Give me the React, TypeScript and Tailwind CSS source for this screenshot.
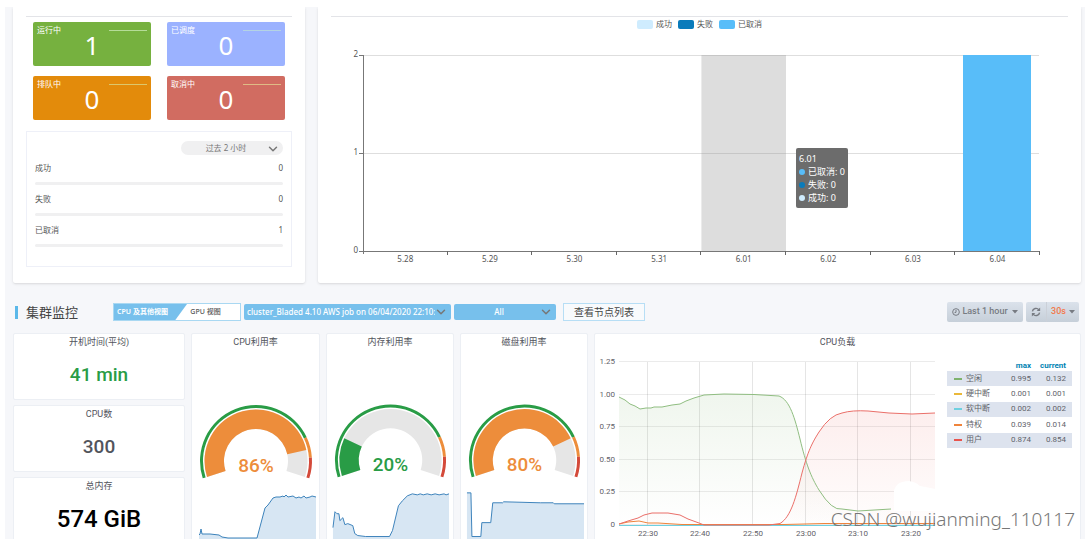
import type { ReactNode } from "react";
import { ChevronDown } from "lucide-react";

const STATUS_TILES = [
    { label: "运行中", value: 1, tile: "bg-[#76b13f]", line: "bg-[#b5dc98]" },
    { label: "已调度", value: 0, tile: "bg-[#9bb2ff]", line: "bg-[#b4d3e2]" },
    { label: "排队中", value: 0, tile: "bg-[#e38b0b]", line: "bg-[#dcc76c]" },
    { label: "取消中", value: 0, tile: "bg-[#d16c61]", line: "bg-[#dfbb85]" },
];

const RECENT = [
    { label: "成功", value: 0 },
    { label: "失败", value: 0 },
    { label: "已取消", value: 1 },
];

const JOB_LEGEND = [
    { label: "成功", color: "bg-[#cfecfe]" },
    { label: "失败", color: "bg-[#0a7bbb]" },
    { label: "已取消", color: "bg-[#58bdf9]" },
];

const JOB_TOOLTIP = [
    { label: "已取消", value: 0, color: "bg-[#58bdf9]" },
    { label: "失败", value: 0, color: "bg-[#0a7bbb]" },
    { label: "成功", value: 0, color: "bg-[#cfecfe]" },
];

const DAYS = ["5.28", "5.29", "5.30", "5.31", "6.01", "6.02", "6.03", "6.04"];

const CPU_ROWS = [
    { name: "空闲", color: "bg-[#7eb26d]", max: "0.995", current: "0.132" },
    { name: "硬中断", color: "bg-[#eab839]", max: "0.001", current: "0.001" },
    { name: "软中断", color: "bg-[#6ed0e0]", max: "0.002", current: "0.002" },
    { name: "特权", color: "bg-[#ef843c]", max: "0.039", current: "0.014" },
    { name: "用户", color: "bg-[#e8544d]", max: "0.874", current: "0.854" },
];

const CPU_SPARK =
    "7,202 8,201 9,196 10,201 12,201 18,201 27,202 30,204 36,205 65,205 69,190 73,175 76,172 81,165 84,164 88,164 91,163 92,164 94,162 96,164 101,163 104,165 107,164 109,165 112,163 114,165 118,164 120,163 124,164";
const MEMORY_SPARK =
    "6,196 8,180 10,182 12,182 13,189 16,186 18,193 21,192 26,194 28,202 31,204 39,205 63,205 66,199 72,174 76,169 81,164 86,162 91,163 94,162 97,163 101,162 105,163 109,162 113,163 118,162 120,163 123,162";
const DISK_SPARK =
    "6,161 10,161 11,205 20,205 21,191 30,191 32,171 42,171 43,170 80,171 93,171 94,172 124,172";

function arc(cx: number, cy: number, outer: number, inner: number, from: number, to: number) {
    const point = (r: number, t: number) => {
        const a = ((198 - t * 216) * Math.PI) / 180;
        return `${(cx + r * Math.cos(a)).toFixed(2)} ${(cy - r * Math.sin(a)).toFixed(2)}`;
    };
    const large = (to - from) * 216 > 180 ? 1 : 0;
    return `M${point(outer, from)}A${outer} ${outer} 0 ${large} 1 ${point(outer, to)}L${point(inner, to)}A${inner} ${inner} 0 ${large} 0 ${point(inner, from)}Z`;
}

function SelectArrow() {
    return (
        <ChevronDown
            strokeWidth={2.5}
            className="pointer-events-none absolute top-px right-[3px] h-[14px] w-[14px] text-[#777]"
        />
    );
}

function JobStatusCard() {
    return (
        <section className="rounded-b-xs bg-white px-3 pt-[9px] pb-4 shadow">
            <div className="mx-px border-t border-[#e3e4e8]" />
            <div className="mt-[5px] grid grid-cols-2 gap-x-4 gap-y-[10px] px-2">
                {STATUS_TILES.map((t) => (
                    <div
                        key={t.label}
                        className={`flex h-11 flex-col rounded-xs px-1 pt-1 text-white ${t.tile}`}
                    >
                        <div className="flex h-2 items-center justify-between">
                            <span className="text-[8px] leading-[8px]">{t.label}</span>
                            <span className={`h-px w-[38px] ${t.line}`} />
                        </div>
                        <div className="text-center text-[26px] leading-[22px]">{t.value}</div>
                    </div>
                ))}
            </div>
            <div className="mx-px mt-[11px] h-[136px] border border-[#eef0f8] px-2 pt-[9px]">
                <div className="relative ml-auto w-[102px]">
                    <select
                        aria-label="时间范围"
                        className="block h-[14px] w-full appearance-none rounded-full bg-[#f0f0f1] pr-3 text-center text-[8px] text-[#777]"
                    >
                        <option>过去 2 小时</option>
                    </select>
                    <SelectArrow />
                </div>
                <ul className="mt-[7px]">
                    {RECENT.map((r) => (
                        <li key={r.label} className="h-[31px] text-[8px] text-[#555]">
                            <div className="flex h-3 items-center justify-between">
                                <span>{r.label}</span>
                                <span>{r.value}</span>
                            </div>
                            <div className="mt-2 h-[3px] rounded-full bg-[#f0f0f1]" />
                        </li>
                    ))}
                </ul>
            </div>
        </section>
    );
}

function JobHistoryCard() {
    const step = 84.6;
    return (
        <section className="rounded-b-xs bg-white px-[13px] pt-[9px] pb-[14px] shadow">
            <div className="border-t border-[#e3e4e8]" />
            <div className="mt-0.5 flex h-[10px] items-center justify-center gap-[6px] text-[8px] text-[#555]">
                {JOB_LEGEND.map((l) => (
                    <span key={l.label} className="flex items-center gap-[3px]">
                        <span className={`h-[9px] w-4 rounded-xs ${l.color}`} />
                        {l.label}
                    </span>
                ))}
            </div>
            <div className="relative">
                <svg viewBox="0 0 737 240" className="block w-full" fontSize="8" fill="#555">
                    <path d="M32 26.5H708M32 124.5H708" stroke="#dedede" />
                    <rect x={32 + step * 4} y="26" width={step} height="196" fill="#969696" opacity="0.32" />
                    <rect x="632" y="26" width="68" height="196" fill="#58bdf9" />
                    <path d="M32.5 26V225M28 26.5H32M28 124.5H32M28 222.5H709" stroke="#777" fill="none" />
                    {DAYS.map((d, i) => (
                        <g key={d}>
                            <path
                                d={`M${Math.round(32 + step * (i + 1)) - 0.5} 222V226`}
                                stroke="#666"
                            />
                            <text x={32 + step * (i + 0.5)} y="233" textAnchor="middle">
                                {d}
                            </text>
                        </g>
                    ))}
                    <text x="27" y="28" textAnchor="end">2</text>
                    <text x="27" y="126" textAnchor="end">1</text>
                    <text x="27" y="224" textAnchor="end">0</text>
                </svg>
                <div className="absolute top-[119px] left-[63.1%] h-[60px] rounded-xs bg-[#6c6c6c] px-[3px] pt-1 text-[9px] leading-[13px] whitespace-nowrap text-white">
                    <div>6.01</div>
                    {JOB_TOOLTIP.map((t) => (
                        <div key={t.label} className="flex items-center gap-[3px]">
                            <span className={`h-[6px] w-[6px] rounded-full ${t.color}`} />
                            {t.label}: {t.value}
                        </div>
                    ))}
                </div>
            </div>
        </section>
    );
}

function Toolbar() {
    return (
        <div className="mt-[19px] flex h-5 items-center">
            <span className="ml-0.5 h-[13px] w-[3px] bg-[#5bb8e9]" />
            <h2 className="ml-2 text-[13px] leading-5 text-[#444]">集群监控</h2>
            <div className="ml-[35px] flex h-[18px] w-32 border border-[#a9d8f2] bg-white text-[7px]">
                <button
                    type="button"
                    className="h-full w-[73px] bg-[#77c0ec] pr-4 font-semibold whitespace-nowrap text-white [clip-path:polygon(0_0,100%_0,84%_100%,0_100%)]"
                >
                    CPU 及其他视图
                </button>
                <button type="button" className="h-full flex-1 pr-4 font-medium whitespace-nowrap text-[#555]">
                    GPU 视图
                </button>
            </div>
            <div className="relative ml-[3px] w-[207px]">
                <select
                    aria-label="集群"
                    className="block h-4 w-full appearance-none overflow-hidden rounded-xs bg-[#77c0ec] pr-4 pl-[3px] text-[8px] font-medium text-white"
                >
                    <option>cluster_Bladed 4.10 AWS job on 06/04/2020 22:10:49</option>
                </select>
                <SelectArrow />
            </div>
            <div className="relative ml-[3px] w-[102px]">
                <select
                    aria-label="节点"
                    className="block h-4 w-full appearance-none rounded-xs bg-[#77c0ec] pr-3 text-center text-[8px] font-medium text-white"
                >
                    <option>All</option>
                </select>
                <SelectArrow />
            </div>
            <button
                type="button"
                className="ml-[7px] h-[18px] w-[82px] border border-[#b7def5] bg-[#f8fafc] text-[10px] leading-4 text-[#444]"
            >
                查看节点列表
            </button>
            <div className="mr-0.5 ml-auto flex gap-[3px] font-['Roboto','Noto_Sans_CJK_SC',sans-serif] text-[9px] font-medium text-[#777b82]">
                <button
                    type="button"
                    className="flex h-5 w-[76px] items-center justify-center gap-0.5 rounded-xs bg-linear-to-b from-[#dbe2eb] to-[#c6cfd9] whitespace-nowrap"
                >
                    <svg viewBox="0 0 12 12" className="h-2 w-2" fill="none" stroke="currentColor" strokeWidth="1.5">
                        <circle cx="6" cy="6" r="5" />
                        <path d="M6 3V6.5L3.8 7" />
                    </svg>
                    Last 1 hour
                    <Caret />
                </button>
                <div className="flex h-5 rounded-xs bg-linear-to-b from-[#dbe2eb] to-[#c6cfd9]">
                    <button type="button" aria-label="刷新" className="flex w-5 items-center justify-center">
                        <svg viewBox="0 0 14 14" className="h-[10px] w-[10px]" fill="none" stroke="currentColor" strokeWidth="2">
                            <path d="M2 6.2A5 5 0 0 1 11 4M12 7.8A5 5 0 0 1 3 10" />
                            <path d="M12.8 .8V5.6H8ZM1.2 13.2V8.4H6Z" fill="currentColor" stroke="none" />
                        </svg>
                    </button>
                    <button
                        type="button"
                        className="flex w-[33px] items-center justify-center gap-px border-l border-[#cbd0d8] text-[#f37a4c]"
                    >
                        30s
                        <Caret />
                    </button>
                </div>
            </div>
        </div>
    );
}

function Caret() {
    return (
        <svg viewBox="0 0 6 4" className="ml-0.5 h-1 w-[6px]" fill="#777b82">
            <path d="M0 0H6L3 3.5Z" />
        </svg>
    );
}

function Panel({ title, children }: { title: string; children: ReactNode }) {
    return (
        <section className="min-w-0 overflow-hidden rounded-xs border border-[#eceff4] bg-white">
            <h3 className="h-[17px] text-center text-[9px] leading-[17px] font-normal text-[#52545c]">
                {title}
            </h3>
            {children}
        </section>
    );
}

function GaugePanel({ title, value, spark }: { title: string; value: number; spark: string }) {
    const v = value / 100;
    const color = value < 80 ? "#299c46" : "#ed8d3b";
    const points = spark.split(" ");
    const first = points[0].split(",")[0];
    const last = points[points.length - 1].split(",")[0];
    return (
        <Panel title={title}>
            <svg viewBox="0 18 127 190" className="block w-full">
                <path d={arc(64, 128, 51.5, 32, 0, 1)} fill="#e6e6e6" />
                <path d={arc(64, 128, 51.5, 32, 0, v)} fill={color} />
                <path d={arc(64, 128, 56, 53, 0, 0.8)} fill="#299c46" />
                <path d={arc(64, 128, 56, 53, 0.8, 0.9)} fill="#ed8d3b" />
                <path d={arc(64, 128, 56, 53, 0.9, 1)} fill="#d44a3a" />
                <text x="64" y="139" textAnchor="middle" fontSize="19" fontWeight="500" fill={color}>
                    {value}%
                </text>
                <polygon points={`${first},208 ${spark} ${last},208`} fill="#d7e6f3" />
                <polyline points={spark} fill="none" stroke="#3d83bb" />
            </svg>
        </Panel>
    );
}

const GRID_X = [
    { x: 54, label: "22:30" },
    { x: 106, label: "22:40" },
    { x: 159, label: "22:50" },
    { x: 212, label: "23:00" },
    { x: 264, label: "23:10" },
    { x: 317, label: "23:20" },
];
const GRID_Y = [
    { y: 29, label: "1.25" },
    { y: 62, label: "1.00" },
    { y: 94, label: "0.75" },
    { y: 127, label: "0.50" },
    { y: 159, label: "0.25" },
    { y: 192, label: "0" },
];

const IDLE =
    "M25 64L31 67L36 71L41 73L46 76L52 75H57L60 74L68 74L78 72L86 71L92 68L100 65L110 62L130 61L160 61.5L185 63C196 67 201 86 206 106C212 131 217 144 225 157Q238 178 248 176L264 178L297 176";
const USER =
    "M25 191L34 188L44 185L50 182L58 180H74L86 182L94 186L105 190L110 192H175L186 190.500C197 184 202 164 208 140C214 118 218 110 225 99Q236 82 248 80Q258 77 274 78L295 80L318 81L341 80";

function CpuLoadPanel() {
    return (
        <Panel title="CPU负载">
            <div className="grid grid-cols-[346fr_139fr] items-start">
                <svg viewBox="1 18 346 190" className="block w-full" fontSize="8" fill="#5f6168">
                    <defs>
                        <linearGradient id="idle" x1="0" y1="0" x2="0" y2="1">
                            <stop offset="0" stopColor="#7eb26d" stopOpacity="0.12" />
                            <stop offset="1" stopColor="#7eb26d" stopOpacity="0" />
                        </linearGradient>
                        <linearGradient id="user" x1="0" y1="0" x2="0" y2="1">
                            <stop offset="0" stopColor="#e8544d" stopOpacity="0.1" />
                            <stop offset="1" stopColor="#e8544d" stopOpacity="0.01" />
                        </linearGradient>
                    </defs>
                    {GRID_Y.map((g) => (
                        <g key={g.label}>
                            <path d={`M25 ${g.y - 0.5}H341`} stroke="#000" strokeOpacity="0.08" />
                            <text x="21" y={g.y + 2} textAnchor="end">
                                {g.label}
                            </text>
                        </g>
                    ))}
                    {GRID_X.map((g) => (
                        <g key={g.label}>
                            <path d={`M${g.x - 0.5} 29V192`} stroke="#000" strokeOpacity="0.1" />
                            <text x={g.x} y="203" textAnchor="middle">
                                {g.label}
                            </text>
                        </g>
                    ))}
                    <path d={`${IDLE}V192H25Z`} fill="url(#idle)" />
                    <path d={`${USER}V192H25Z`} fill="url(#user)" />
                    <path d="M25 192.500H341" stroke="#6ed0e0" />
                    <path
                        d="M25 191L34 189L45 188L54 190L64 190L88 191.500H190L230 190.500H341"
                        fill="none"
                        stroke="#ef843c"
                    />
                    <path d={IDLE} fill="none" stroke="#8fbd80" />
                    <path d={USER} fill="none" stroke="#ea6f69" />
                    <path
                        d="M300 178V158Q302 148 315 148Q322 149 326 153L352 158L351 178Z"
                        fill="#fff"
                    />
                </svg>
                <div className="min-w-0 pt-[10px] pr-2 pl-[6px]">
                    <table className="h-[87px] w-full table-fixed border-collapse text-right text-[8px] leading-[10px] text-[#62646b]">
                        <thead>
                            <tr className="text-[#0083b3]">
                                <th aria-label="名称" className="w-[54px] p-0" />
                                <th className="h-[10px] p-0 text-right font-bold">max</th>
                                <th className="w-[41px] p-0 pr-[6px] text-right font-bold">current</th>
                            </tr>
                        </thead>
                        <tbody>
                            {CPU_ROWS.map((r) => (
                                <tr key={r.name} className="odd:bg-[#dde3ee]">
                                    <td className="p-0 pl-[7px] text-left">
                                        <span className="flex items-center gap-1 whitespace-nowrap">
                                            <span className={`h-0.5 w-2 shrink-0 ${r.color}`} />
                                            {r.name}
                                        </span>
                                    </td>
                                    <td className="p-0">{r.max}</td>
                                    <td className="p-0 pr-[6px]">{r.current}</td>
                                </tr>
                            ))}
                        </tbody>
                    </table>
                </div>
            </div>
        </Panel>
    );
}

export default function App() {
    return (
        <main className="relative h-screen overflow-hidden bg-white px-[5px] pt-[7px] font-['Noto_Sans','Noto_Sans_CJK_SC',sans-serif]">
            <div className="flex h-full flex-col overflow-hidden bg-[#f6f7fa] pr-1 pl-2">
                <div className="grid grid-cols-[292fr_763fr] gap-[13px]">
                    <JobStatusCard />
                    <JobHistoryCard />
                </div>
                <Toolbar />
                <div className="mt-[11px] grid min-h-0 flex-1 grid-cols-[172fr_129fr_128fr_128fr_487fr] gap-[6px] font-['Roboto','Noto_Sans_CJK_SC',sans-serif]">
                    <div className="flex flex-col gap-[5px]">
                        <Panel title="开机时间(平均)">
                            <p className="h-12 text-center text-[19px] leading-[48px] font-medium text-[#299c46]">41 min</p>
                        </Panel>
                        <Panel title="CPU数">
                            <p className="h-12 text-center text-[19px] leading-[48px] font-medium text-[#52545c]">300</p>
                        </Panel>
                        <Panel title="总内存">
                            <p className="h-12 text-center text-[24px] leading-[48px] font-medium text-black">574 GiB</p>
                        </Panel>
                    </div>
                    <GaugePanel title="CPU利用率" value={86} spark={CPU_SPARK} />
                    <GaugePanel title="内存利用率" value={20} spark={MEMORY_SPARK} />
                    <GaugePanel title="磁盘利用率" value={80} spark={DISK_SPARK} />
                    <CpuLoadPanel />
                </div>
            </div>
            <div className="absolute right-[15px] bottom-2 text-[19px] leading-6 font-light text-[#777]">
                CSDN @wujianming_110117
            </div>
        </main>
    );
}
